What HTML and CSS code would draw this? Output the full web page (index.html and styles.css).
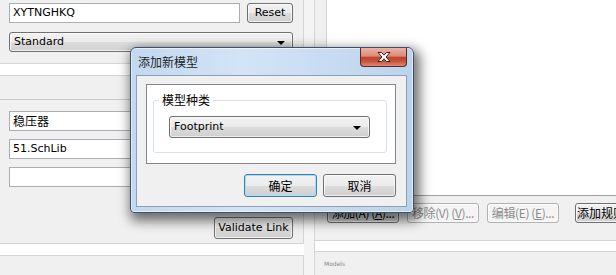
FILE: index.html
```html
<!DOCTYPE html>
<html lang="zh">
<head>
    <meta charset="UTF-8">
    <link rel="stylesheet" href="styles.css">
    <title>添加新模型</title>
</head>
<body>
    <div class="app">
        <div class="left">
            <div class="pane pane-top">
                <div class="row">
                    <div class="field field-name">XYTNGHKQ</div>
                    <div class="btn btn-reset">Reset</div>
                </div>
                <div class="combo combo-wide">Standard<span class="arrow"></span></div>
            </div>
            <div class="pane pane-mid">
                <div class="mid-head"></div>
                <div class="fields">
                    <div class="field zh">稳压器</div>
                    <div class="field">51.SchLib</div>
                    <div class="field"></div>
                </div>
                <div class="validate-row">
                    <div class="btn btn-validate">Validate Link</div>
                </div>
            </div>
            <div class="pane pane-bottom"></div>
        </div>

        <div class="splitter"></div>

        <div class="right">
            <div class="list-area">
                <div class="list-box"></div>
            </div>
            <div class="pane pane-actions">
                <div class="btn btn-act zh">添加(A) (<u>A</u>)...</div>
                <div class="btn btn-act btn-off zh">移除(V) (<u>V</u>)...</div>
                <div class="btn btn-act btn-off zh">编辑(E) (<u>E</u>)...</div>
                <div class="btn btn-act btn-rule zh">添加规则</div>
            </div>
            <div class="pane pane-models">
                <span class="models-label">Models</span>
            </div>
        </div>
    </div>

    <div class="dialog">
        <div class="dialog-title">
            <span class="title-text zh">添加新模型</span>
            <div class="close-btn">
                <svg width="16" height="12" viewBox="0 0 16 12">
                    <path d="M2 1.5 L5.6 1.5 L8 4.2 L10.4 1.5 L14 1.5 L10 6 L14 10.5 L10.4 10.5 L8 7.8 L5.6 10.5 L2 10.5 L6 6 Z" fill="#fff" stroke="#3b2520" stroke-width="1" stroke-linejoin="round"/>
                </svg>
            </div>
        </div>
        <div class="dialog-client">
            <div class="white-panel">
                <div class="group">
                    <span class="group-label zh">模型种类</span>
                    <div class="combo combo-type">Footprint<span class="arrow"></span></div>
                </div>
            </div>
            <div class="dialog-buttons">
                <div class="btn btn-dlg btn-default zh">确定</div>
                <div class="btn btn-dlg zh">取消</div>
            </div>
        </div>
    </div>
</body>
</html>
```

FILE: styles.css
```css
body {
    margin: 0;
    width: 616px;
    height: 275px;
    overflow: hidden;
    position: relative;
    background-color: #fff;
    font-family: 'DejaVu Sans', 'Noto Sans CJK SC', sans-serif;
    font-size: 11px;
    color: #000;
}

.zh {
    font-family: 'Noto Sans CJK SC', 'DejaVu Sans', sans-serif;
    font-size: 12px;
}

.app {
    display: grid;
    grid-template-columns: 304px 10px 1fr;
    height: 275px;
}

.left {
    display: flex;
    flex-direction: column;
    gap: 11px;
}

.pane {
    background-color: #f0f0f0;
    box-sizing: border-box;
}

.pane-top {
    height: 64px;
    padding: 3px 10px 0 9px;
    border-right: 1px solid #d5d5d5;
    border-bottom: 1px solid #d5d5d5;
}

.row {
    display: flex;
    gap: 7px;
    margin-bottom: 9px;
}

.field {
    height: 20px;
    box-sizing: border-box;
    border: 1px solid #abadb3;
    background-color: #fff;
    padding: 0 3px;
    line-height: 18px;
}

.field-name {
    width: 231px;
}

.btn {
    box-sizing: border-box;
    border: 1px solid #707070;
    border-radius: 3px;
    background: linear-gradient(#f2f2f2 0%, #ebebeb 50%, #dddddd 51%, #cfcfcf 100%);
    box-shadow: inset 0 0 0 1px rgba(255, 255, 255, 0.7);
    text-align: center;
    white-space: nowrap;
}

.btn-reset {
    width: 46px;
    height: 20px;
    line-height: 18px;
}

.combo {
    position: relative;
    box-sizing: border-box;
    height: 20px;
    border: 1px solid #707070;
    border-radius: 3px;
    background: linear-gradient(#f2f2f2 0%, #ebebeb 50%, #dddddd 51%, #cfcfcf 100%);
    box-shadow: inset 0 0 0 1px rgba(255, 255, 255, 0.7);
    padding-left: 4px;
    line-height: 18px;
}

.combo-wide {
    width: 284px;
}

.arrow {
    position: absolute;
    right: 7px;
    top: 8px;
    border-left: 4px solid transparent;
    border-right: 4px solid transparent;
    border-top: 4px solid #000;
}

.pane-mid {
    height: 169px;
    border-top: 1px solid #d5d5d5;
    border-right: 1px solid #d5d5d5;
    border-bottom: 1px solid #d5d5d5;
}

.mid-head {
    height: 23px;
    border-bottom: 1px solid #c8c8c8;
}

.fields {
    display: flex;
    flex-direction: column;
    gap: 8px;
    padding: 11px 10px 0 9px;
}

.validate-row {
    display: flex;
    justify-content: flex-end;
    padding: 30px 10px 0 0;
}

.btn-validate {
    width: 79px;
    height: 22px;
    line-height: 20px;
}

.pane-bottom {
    flex: 1;
    border-top: 1px solid #d5d5d5;
    border-right: 1px solid #d5d5d5;
}

.splitter {
    background-color: #f4f4f4;
}

.right {
    display: flex;
    flex-direction: column;
    border-left: 1px solid #d5d5d5;
    background-color: #fff;
}

.list-area {
    height: 196px;
    padding-left: 11px;
    background-color: #f0f0f0;
    box-sizing: border-box;
}

.list-box {
    height: 100%;
    background-color: #fff;
    border-left: 1px solid #d0d0d0;
    border-bottom: 1px solid #a0a0a0;
    box-sizing: border-box;
}

.pane-actions {
    display: flex;
    gap: 8px;
    height: 45px;
    padding: 7px 0 0 12px;
    border-bottom: 1px solid #d5d5d5;
    overflow: hidden;
}

.btn-act {
    flex: none;
    width: 72px;
    height: 20px;
    line-height: 18px;
    letter-spacing: -0.4px;
}

.btn-off {
    color: #8d8d8d;
    border-color: #adb2b5;
    background: #f4f4f4;
}

.btn-rule {
    margin-left: 8px;
    width: 70px;
    text-align: left;
    padding-left: 1px;
    letter-spacing: 0;
}

.pane-models {
    margin-top: 10px;
    flex: 1;
    border-top: 1px solid #d5d5d5;
    padding: 4px 0 0 9px;
}

.models-label {
    font-family: 'DejaVu Sans', sans-serif;
    font-size: 6px;
    color: #8a8a8a;
}

.dialog {
    position: absolute;
    left: 130px;
    top: 47px;
    width: 284px;
    height: 166px;
    box-sizing: border-box;
    border: 1px solid #3e506a;
    border-radius: 6px 6px 4px 4px;
    background: linear-gradient(90deg, #c2d8ef 0%, #d3e4f6 40%, #bcd3ec 100%);
    box-shadow: 3px 5px 12px 3px rgba(0, 0, 0, 0.55), inset 0 0 0 1px rgba(255, 255, 255, 0.55);
    padding: 0 6px 0 5px;
}

.dialog-title {
    position: relative;
    height: 27px;
}

.title-text {
    display: block;
    padding: 6px 0 0 2px;
    line-height: 16px;
    color: #1e1e1e;
}

.close-btn {
    position: absolute;
    right: 0;
    top: 0;
    width: 47px;
    height: 19px;
    box-sizing: border-box;
    border: 1px solid #5b2a22;
    border-top: none;
    border-radius: 0 0 4px 4px;
    background: linear-gradient(#eab2a6 0%, #dc8b78 45%, #c0432b 52%, #c9543c 75%, #dc8b77 100%);
    display: flex;
    align-items: center;
    justify-content: center;
}

.dialog-client {
    height: 132px;
    box-sizing: border-box;
    border: 1px solid #8aa0bc;
    background-color: #f0f0f0;
    padding: 8px 10px 0 9px;
}

.white-panel {
    height: 80px;
    box-sizing: border-box;
    border: 1px solid #828790;
    background-color: #fff;
    padding: 15px 8px 0 6px;
}

.group {
    position: relative;
    height: 53px;
    box-sizing: border-box;
    border: 1px solid #d5dfe5;
    border-radius: 3px;
    padding: 15px 0 0 15px;
}

.group-label {
    position: absolute;
    left: 5px;
    top: -10px;
    padding: 0 3px;
    background-color: #fff;
    line-height: 18px;
}

.combo-type {
    width: 201px;
    height: 22px;
    line-height: 20px;
    padding-left: 4px;
}

.combo-type .arrow {
    top: 9px;
    right: 8px;
}

.dialog-buttons {
    display: flex;
    justify-content: flex-end;
    gap: 6px;
    margin-top: 10px;
}

.btn-dlg {
    width: 73px;
    height: 23px;
    line-height: 21px;
}

.btn-default {
    border-color: #3c7fb1;
    box-shadow: inset 0 0 0 1px #a9dcf6;
}
```
